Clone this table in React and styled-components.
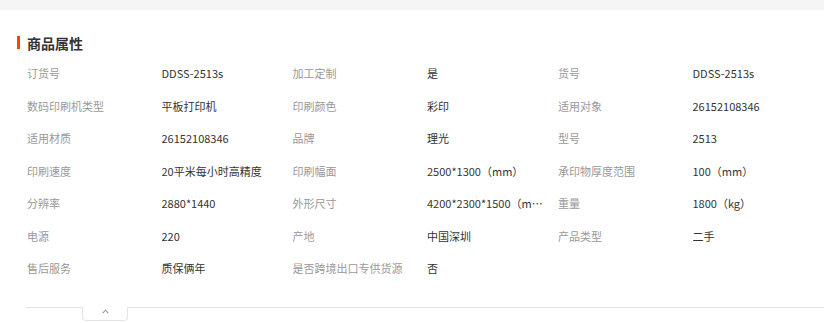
import React from "react";
import styled, { createGlobalStyle } from "styled-components";

const Global = createGlobalStyle`
  html, body { margin: 0; padding: 0; background: #fff; }
  body { font-family: "Microsoft YaHei", "Noto Sans CJK SC", "Liberation Sans", sans-serif; }
  * { box-sizing: border-box; }
`;

const TopBand = styled.div`
  height: 10px;
  background: #f5f5f5;
`;

const Section = styled.section`
  padding: 23px 0 0 17px;
`;

const Title = styled.h2`
  margin: 0;
  display: flex;
  align-items: center;
  gap: 7px;
  height: 19px;
  font-size: 14px;
  font-weight: 700;
  color: #333;
  &::before {
    content: "";
    width: 3px;
    height: 13px;
    background: #ff4400;
  }
`;

const Grid = styled.div`
  margin: 5px 0 0 10px;
  display: grid;
  grid-template-columns: repeat(3, 134.5px 131px);
  grid-auto-rows: 32.5px;
  align-items: center;
  font-size: 11px;
  line-height: 18px;
`;

const Label = styled.div`
  color: #999;
  white-space: nowrap;
  overflow: hidden;
`;

const Value = styled.div`
  color: #333;
  white-space: nowrap;
  overflow: hidden;
  text-overflow: ellipsis;
  padding-right: 11px;
`;

const Footer = styled.div`
  display: flex;
  margin: 22px 0 0 26px;
  height: 14px;
`;

const Line = styled.div`
  border-top: 1px solid #e5e5e5;
  width: ${(p) => p.$w || "auto"};
  flex: ${(p) => (p.$grow ? 1 : "none")};
`;

const Tab = styled.div`
  width: 46px;
  height: 14px;
  border: 1px solid #e5e5e5;
  border-top: none;
  border-radius: 0 0 4px 4px;
  display: flex;
  justify-content: center;
  align-items: flex-start;
  padding-top: 2px;
`;

const rows = [
  ["订货号", "DDSS-2513s", "加工定制", "是", "货号", "DDSS-2513s"],
  ["数码印刷机类型", "平板打印机", "印刷颜色", "彩印", "适用对象", "26152108346"],
  ["适用材质", "26152108346", "品牌", "理光", "型号", "2513"],
  ["印刷速度", "20平米每小时高精度", "印刷幅面", "2500*1300（mm）", "承印物厚度范围", "100（mm）"],
  ["分辨率", "2880*1440", "外形尺寸", "4200*2300*1500（mm）", "重量", "1800（kg）"],
  ["电源", "220", "产地", "中国深圳", "产品类型", "二手"],
  ["售后服务", "质保俩年", "是否跨境出口专供货源", "否"],
];

export default function App() {
  return (
    <>
      <Global />
      <TopBand />
      <Section>
        <Title>商品属性</Title>
        <Grid>
          {rows.map((r, i) =>
            r.map((t, j) =>
              j % 2 === 0 ? (
                <Label key={`${i}-${j}`}>{t}</Label>
              ) : (
                <Value key={`${i}-${j}`} title={t}>{t}</Value>
              )
            )
          )}
        </Grid>
      </Section>
      <Footer>
        <Line $w="56px" />
        <Tab>
          <svg width="7" height="5" viewBox="0 0 7 5">
            <path d="M0.7 4.2 L3.5 1.2 L6.3 4.2" fill="none" stroke="#999" strokeWidth="1.1" />
          </svg>
        </Tab>
        <Line $grow />
      </Footer>
    </>
  );
}
